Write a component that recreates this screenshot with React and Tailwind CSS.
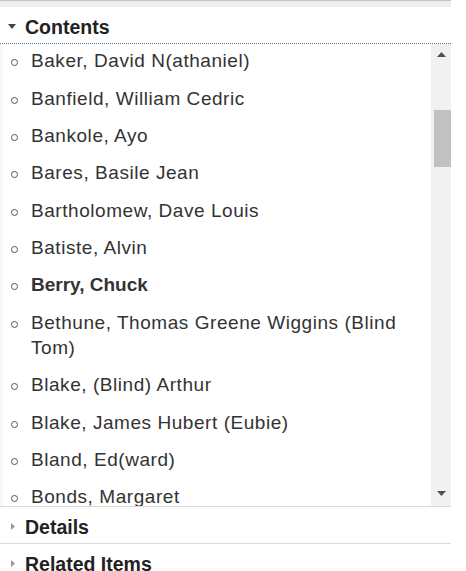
import React from "react";

const items = [
  { t: "Baker, David N(athaniel)" },
  { t: "Banfield, William Cedric" },
  { t: "Bankole, Ayo" },
  { t: "Bares, Basile Jean" },
  { t: "Bartholomew, Dave Louis" },
  { t: "Batiste, Alvin" },
  { t: "Berry, Chuck", b: true },
  { t: "Bethune, Thomas Greene Wiggins (Blind Tom)" },
  { t: "Blake, (Blind) Arthur" },
  { t: "Blake, James Hubert (Eubie)" },
  { t: "Bland, Ed(ward)" },
  { t: "Bonds, Margaret" },
];

function Row({ label }) {
  return (
    <div className="h-[37px] flex items-center border-t border-[#d9d9d9]">
      <svg width="4" height="7" viewBox="0 0 4 7" className="ml-[11px] mr-[10px] mt-[3px]">
        <polygon points="0,0 4,3.5 0,7" fill="#9a9a9a" />
      </svg>
      <span className="text-[19.5px] leading-[22px] mt-[4px] font-bold text-[#222]">{label}</span>
    </div>
  );
}

export default function App() {
  return (
    <div className="w-[451px] bg-white font-['Liberation_Sans',Arial,sans-serif]">
      <div className="h-[7px] border-t border-[#c4c4c4] bg-[#eeeeee]" />
      <div className="h-[37px] flex items-center border-b border-dotted border-[#4a7fa8]">
        <svg width="8" height="5" viewBox="0 0 8 5" className="ml-[8px] mr-[9px] mt-[2px]">
          <polygon points="0,0 8,0 4,5" fill="#444" />
        </svg>
        <span className="text-[19.5px] leading-[22px] mt-[3px] font-bold text-[#222]">Contents</span>
      </div>
      <div className="h-[462px] flex">
        <div className="flex-1 overflow-hidden shadow-[inset_5px_0_5px_-3px_rgba(0,0,0,0.05)]">
          <ul className="-mt-[2px] pr-[20px]">
            {items.map((it, i) => (
              <li key={i} className="flex py-[6.2px]">
                <span className="w-[31px] shrink-0 flex justify-start">
                  <span className="mt-[11px] ml-[11px] w-[7px] h-[7px] rounded-full border border-[#555]" />
                </span>
                <span
                  className={
                    "text-[19px] leading-[25px] text-[#333] " +
                    (it.b ? "font-bold" : "font-normal tracking-[0.55px]")
                  }
                >
                  {it.t}
                </span>
              </li>
            ))}
          </ul>
        </div>
        <div className="w-[20px] bg-[#f1f1f1] flex flex-col items-center">
          <svg width="9" height="5" viewBox="0 0 9 5" className="mt-[8px]">
            <polygon points="0,5 9,5 4.5,0" fill="#505050" />
          </svg>
          <div className="mt-[53px] w-[17px] h-[57px] ml-[3px] bg-[#c1c1c1]" />
          <div className="flex-1" />
          <svg width="9" height="5" viewBox="0 0 9 5" className="mb-[10px]">
            <polygon points="0,0 9,0 4.5,5" fill="#505050" />
          </svg>
        </div>
      </div>
      <Row label="Details" />
      <Row label="Related Items" />
    </div>
  );
}
